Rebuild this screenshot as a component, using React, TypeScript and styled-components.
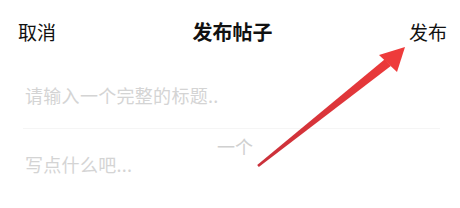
import styled, { createGlobalStyle } from 'styled-components';

const GlobalStyle = createGlobalStyle`
  html, body {
    margin: 0;
    padding: 0;
    background: #ffffff;
  }
  * {
    box-sizing: border-box;
  }
`;

const Page = styled.div`
  position: relative;
  width: 460px;
  height: 208px;
  overflow: hidden;
  background: #ffffff;
  font-family: "Noto Sans CJK SC", "Noto Sans", sans-serif;
`;

const Header = styled.div`
  display: flex;
  align-items: center;
  justify-content: space-between;
  height: 62px;
  padding: 0 13px 0 18px;
`;

const HeaderButton = styled.button`
  border: none;
  background: none;
  padding: 0;
  font-family: inherit;
  font-size: 19px;
  font-weight: 400;
  color: #111111;
  cursor: pointer;
`;

const Title = styled.h1`
  margin: 0;
  font-size: 20px;
  font-weight: 700;
  color: #111111;
`;

const TitleInput = styled.input`
  display: block;
  width: 100%;
  height: 66px;
  border: none;
  outline: none;
  padding: 0 20px 0 25px;
  font-family: inherit;
  font-size: 18px;
  letter-spacing: 0.3px;
  color: #333333;
  background: transparent;

  &::placeholder {
    color: #d4d4d4;
  }
`;

const Divider = styled.div`
  height: 1px;
  margin: 0 20px 0 23px;
  background: #f5f5f5;
`;

const ContentInput = styled.textarea`
  display: block;
  width: 100%;
  height: 79px;
  border: none;
  outline: none;
  resize: none;
  padding: 23px 20px 0 25px;
  font-family: inherit;
  font-size: 18px;
  line-height: 24px;
  letter-spacing: 0.3px;
  color: #333333;
  background: transparent;

  &::placeholder {
    color: #d4d4d4;
  }
`;

const StrayText = styled.span`
  position: absolute;
  left: 217px;
  top: 134px;
  font-size: 18px;
  line-height: 24px;
  color: #d0d0d0;
  pointer-events: none;
`;

const ArrowLayer = styled.svg`
  position: absolute;
  left: 0;
  top: 0;
  pointer-events: none;
`;

const App: React.FC = () => {
  return (
    <>
      <GlobalStyle />
      <Page>
        <Header>
          <HeaderButton>取消</HeaderButton>
          <Title>发布帖子</Title>
          <HeaderButton>发布</HeaderButton>
        </Header>
        <TitleInput placeholder="请输入一个完整的标题.." />
        <Divider />
        <ContentInput placeholder="写点什么吧..." />
        <StrayText>一个</StrayText>
        <ArrowLayer width="460" height="208" viewBox="0 0 460 208">
          <defs>
            <linearGradient id="shaft" x1="258" y1="166" x2="400" y2="52" gradientUnits="userSpaceOnUse">
              <stop offset="0" stopColor="#c9303a" />
              <stop offset="1" stopColor="#ee3a3a" />
            </linearGradient>
          </defs>
          <polygon
            points="258.8,166.9 257.2,165.1 384.8,59.2 390.8,66"
            fill="url(#shaft)"
          />
          <polygon points="405,47 379,55 397,72" fill="#ee3b3b" />
        </ArrowLayer>
      </Page>
    </>
  );
};

export default App;
